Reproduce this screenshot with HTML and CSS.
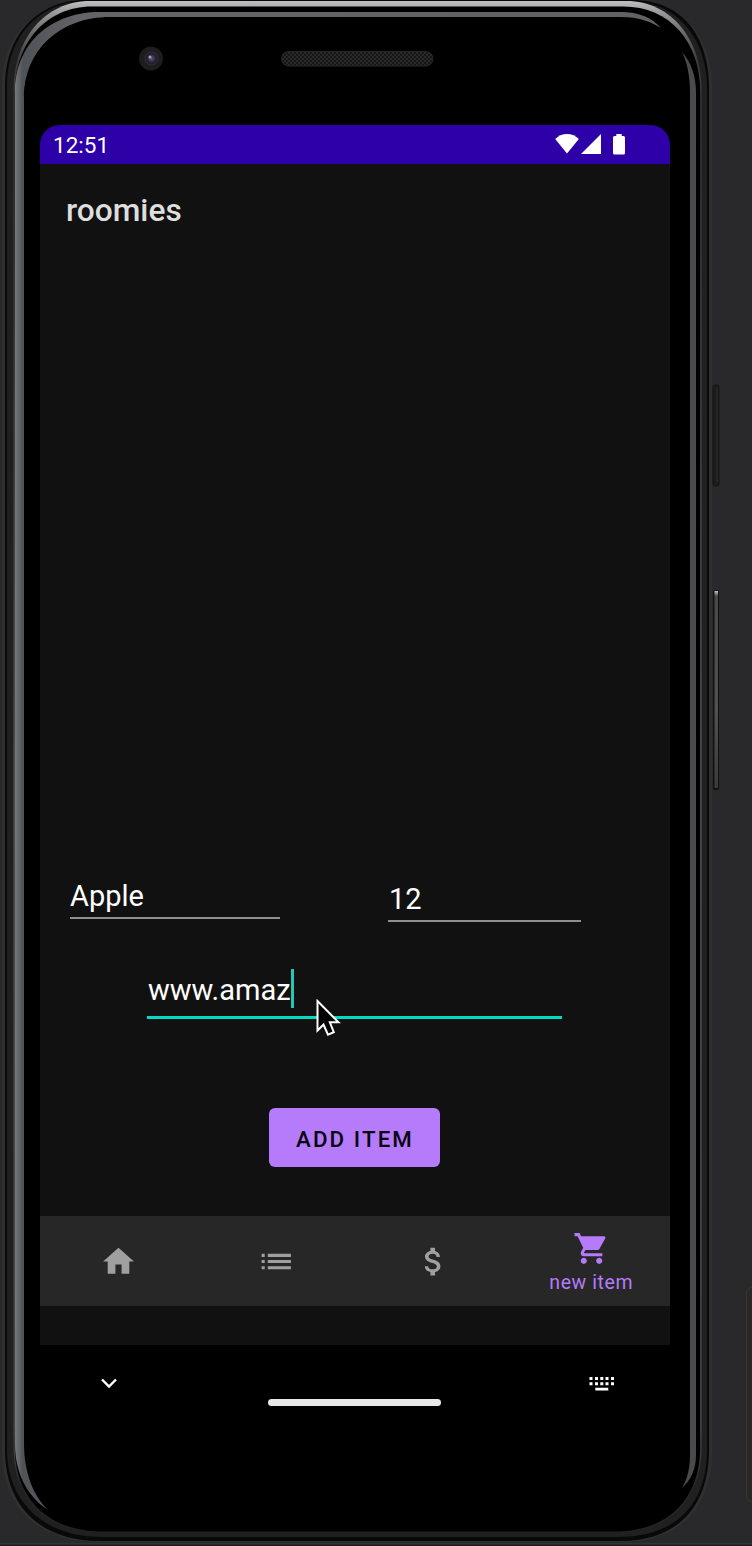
FILE: index.html
```html
<!DOCTYPE html>
<html lang="en">
<head>
<meta charset="utf-8">
<title>roomies</title>
<link rel="stylesheet" href="styles.css">
</head>
<body>
<div class="stage">
  <svg class="device" viewBox="0 0 752 1546" aria-hidden="true">
    <defs>
      <linearGradient id="rim" x1="0" y1="0" x2="0" y2="1">
        <stop offset="0" stop-color="#c0bec1"/><stop offset=".008" stop-color="#98989a"/><stop offset=".022" stop-color="#666"/><stop offset=".04" stop-color="#3c3c3d"/><stop offset=".09" stop-color="#383839"/><stop offset=".5" stop-color="#5c5c5d"/><stop offset=".93" stop-color="#505051"/><stop offset=".97" stop-color="#252525"/>
      </linearGradient>
      <linearGradient id="side" x1="0" y1="0" x2="1" y2="0">
        <stop offset="0" stop-color="#77797c"/><stop offset=".012" stop-color="#4f5257"/><stop offset=".1" stop-color="#646467"/><stop offset="1" stop-color="#626265"/>
      </linearGradient>
      <linearGradient id="key" x1="0" y1="0" x2="0" y2="1">
        <stop offset="0" stop-color="#c9c9c9"/><stop offset=".025" stop-color="#484848"/><stop offset=".6" stop-color="#50504e"/><stop offset="1" stop-color="#3b3b3b"/>
      </linearGradient>
      <pattern id="mesh" width="4" height="4" patternUnits="userSpaceOnUse">
        <rect width="4" height="4" fill="#161616"/><path d="M0 0h2v2H0zM2 2h2v2H2z" fill="#292929"/>
      </pattern>
      <radialGradient id="lens"><stop offset="0" stop-color="#65557e"/><stop offset=".55" stop-color="#30273f"/><stop offset="1" stop-color="#17151c"/></radialGradient>
    </defs>
    <rect x="746.500" y="1287" width="20" height="215" rx="6" fill="#292826" stroke="#363634"/>
    <path d="M0 1543.500H752" stroke="#343436"/><path d="M0 1545.500H752" stroke="#1c1c1f"/>
    <rect x="713" y="385" width="6" height="101" rx="2" fill="#1c1c1d" stroke="#141414"/><path d="M717 388V482" stroke="#303030"/>
    <rect x="713" y="590" width="6" height="200" rx="2" fill="#111"/><rect x="714.500" y="591" width="3.500" height="197" fill="url(#key)"/>
    <path d="M85 0H632C684 0 712 38 712 88V1450C712 1508 680 1542 620 1542H100C38 1542 2 1508 2 1450V85C2 35 38 0 85 0Z" fill="#303031"/>
    <path d="M85 0H632C684 0 709 38 709 88V1450C709 1506 678 1541 620 1541H100C40 1541 5 1506 5 1450V85C5 35 38 0 85 0Z" fill="#090909"/>
    <path d="M88 1H628C678 1 707 40 707 88V1450C707 1504 676 1537 618 1537H102C44 1537 7 1502 7 1450V85C7 38 38 1 88 1Z" fill="#202021"/>
    <path d="M90 1H626C672 1 701.500 40 701.500 90V1448C701.500 1500 670 1532 616 1532H102C46 1532 13.500 1500 13.500 1448V90C13.500 40 44 1 90 1Z" fill="url(#rim)"/>
    <path d="M92 6.500H623C670 6.500 700.200 42 700.200 92V1447C700.200 1499 668 1531.500 615 1531.500H103C47 1531.500 14.800 1498 14.800 1447V92C14.800 43 46 6.500 92 6.500Z" fill="#000"/>
    <path d="M48 1510C25 1495 15 1470 15 1444V92C15 44 50 12 100 12H620C640 12 652 18 661 28C645 18 632 17 615 17H110C60 17 24 50 24 98V1444C24 1470 32 1495 48 1510Z" fill="url(#side)"/>
    <path d="M682 52C691 62 696 76 696 92V1455C696 1469 691 1480 682 1488C688 1478 690 1467 690 1454V92C690 76 687 62 682 52Z" fill="#4b4b4e"/>
    <circle cx="151" cy="58.500" r="12" fill="#1d1d1d"/><circle cx="151.500" cy="58.500" r="6.500" fill="url(#lens)" stroke="#353040"/><circle cx="150" cy="57" r="1.500" fill="#a79abe"/>
    <rect x="281.500" y="51.500" width="151.500" height="14.500" rx="7.250" fill="url(#mesh)" stroke="#262626"/>
  </svg>

  <main class="screen">
    <header class="status">
      <span class="clock">12:51</span>
      <svg class="signals" width="72" height="22" viewBox="0 0 72 22" fill="#fff">
        <path d="M12 20.500L.2 6C3 2.800 7.500.9 12 .9S21 2.800 23.800 6Z"/>
        <path d="M26 21H46V.9Z"/>
        <path d="M61.300 1h5.400v2H68.500q1.500 0 1.500 1.500V20q0 1.500-1.500 1.500h-9q-1.500 0-1.500-1.500V4.500Q58 3 59.500 3h1.800Z"/>
      </svg>
    </header>
    <h1 class="title">roomies</h1>
    <form class="form">
      <div class="row">
        <div class="field name">Apple</div>
        <div class="field amount">12</div>
      </div>
      <div class="field link"><span class="value">www.amaz</span><span class="caret"></span>
        <svg class="pointer" width="26" height="40" viewBox="0 0 26 40"><path d="M1.500 2V31.500L7.500 25.500L12 35.700L17.800 33.200L13.800 23.300H22.500Z" fill="#000" stroke="#fff" stroke-width="2"/></svg>
      </div>
      <button class="add" type="button">ADD ITEM</button>
    </form>
    <nav class="tabs">
      <a class="tab"><svg viewBox="0 0 24 24"><path d="M10 20v-6h4v6h5v-8h3L12 3 2 12h3v8z"/></svg></a>
      <a class="tab list"><svg viewBox="0 0 24 24"><path d="M3 13h2v-2H3v2zm0 4h2v-2H3v2zm0-8h2V7H3v2zm4 4h15v-2H7v2zm0 4h15v-2H7v2zM7 7v2h15V7H7z"/></svg></a>
      <a class="tab"><svg viewBox="0 0 24 24"><path d="M11.800 10.900c-2.270-.59-3-1.200-3-2.150 0-1.090 1.010-1.850 2.700-1.850 1.780 0 2.440.85 2.500 2.100h2.210c-.07-1.720-1.120-3.300-3.210-3.810V3h-3v2.160c-1.940.42-3.500 1.680-3.500 3.610 0 2.310 1.910 3.460 4.700 4.130 2.500.6 3 1.480 3 2.410 0 .69-.49 1.790-2.700 1.790-2.060 0-2.870-.92-2.980-2.100h-2.200c.12 2.190 1.760 3.420 3.680 3.830V21h3v-2.150c1.950-.37 3.500-1.500 3.500-3.550 0-2.840-2.430-3.810-4.700-4.400z"/></svg></a>
      <a class="tab active"><svg viewBox="0 0 24 24"><path d="M7 18c-1.100 0-1.990.9-1.990 2S5.900 22 7 22s2-.9 2-2-.9-2-2-2zM1 2v2h2l3.600 7.590-1.350 2.450c-.16.280-.25.610-.25.960 0 1.100.9 2 2 2h12v-2H7.420c-.14 0-.25-.11-.25-.25l.03-.12.900-1.630h7.450c.75 0 1.410-.41 1.750-1.030l3.580-6.490c.08-.14.120-.31.120-.48 0-.55-.45-1-1-1H5.210l-.94-2H1zm16 16c-1.100 0-1.990.9-1.990 2s.89 2 1.990 2 2-.9 2-2-.9-2-2-2z"/></svg><span>new item</span></a>
    </nav>
  </main>

  <footer class="system">
    <svg class="down" width="18" height="12" viewBox="0 0 18 12"><path d="M2 1.500L9 8.500L16 1.500" fill="none" stroke="#fff" stroke-width="2.400"/></svg>
    <span class="handle"></span>
    <svg class="keys" width="26" height="16" viewBox="0 0 26 16" fill="#fff"><path d="M.5 1h3v3h-3zM6 1h3v3H6zM11.300 1h3v3h-3zM16.500 1h3v3h-3zM22 1h3v3h-3zM.5 6.200h3v3h-3zM6 6.200h3v3H6zM11.300 6.200h3v3h-3zM16.500 6.200h3v3h-3zM22 6.200h3v3h-3zM6.300 11.700h13v2.800h-13z"/></svg>
  </footer>
</div>
</body>
</html>
```
FILE: styles.css
```css
* { box-sizing: border-box; }
body { margin: 0; background: #29292b; font-family: Roboto, sans-serif; color: #fff; }
.stage { position: relative; height: 1546px; overflow: hidden; padding: 125px 82px 0 40px; }
.device { position: absolute; inset: 0; width: 752px; height: 1546px; }
.screen {
  position: relative;
  display: flex;
  flex-direction: column;
  height: 1220px;
  padding-bottom: 39px;
  background: #111;
  border-radius: 20px 20px 0 0;
  overflow: hidden;
}
.status {
  display: flex;
  align-items: center;
  justify-content: space-between;
  height: 39px;
  padding: 1px 43px 0 13px;
  background: #2e00a8;
  font-size: 22.500px;
}
.signals { display: block; margin-top: -3px; }
.title { margin: 29px 0 0 26px; font-size: 31.700px; line-height: 36px; font-weight: 500; color: #dedede; }
.form { flex: 1; display: flex; flex-direction: column; justify-content: flex-end; margin: 0; padding-bottom: 49px; }
.row { display: flex; align-items: flex-start; padding-left: 30px; gap: 108px; }
.field { font-size: 29px; line-height: 40px; white-space: nowrap; }
.name { width: 210px; height: 43px; border-bottom: 2px solid #8f8f8f; }
.amount { width: 193px; height: 43px; margin-top: 3px; padding-left: 1px; border-bottom: 2px solid #8f8f8f; }
.link { position: relative; display: flex; width: 415px; height: 51px; margin: 46px 0 0 107px; border-bottom: 3px solid #03dac5; }
.value { padding: 2px 0 0 1px; }
.caret { width: 3px; height: 39px; margin-top: 1px; background: #26c6b5; }
.pointer { position: absolute; left: 169px; top: 31px; }
.add {
  align-self: center;
  width: 171px;
  height: 59px;
  margin: 89px 2px 0 0;
  padding: 2px 0 0 2px;
  border: 0;
  border-radius: 6px;
  background: #b57bfb;
  color: #080510;
  font: 500 22.300px Roboto, sans-serif;
  letter-spacing: 2.100px;
}
.tabs { display: grid; grid-template-columns: repeat(4, 1fr); height: 90px; background: #272727; }
.tab { display: flex; flex-direction: column; align-items: center; justify-content: center; color: #a0a0a0; font-size: 19.500px; line-height: 22px; letter-spacing: .6px; }
.tab svg { width: 37px; height: 37px; fill: currentColor; }
.list { padding-right: 2px; }
.active { color: #b57bfb; }
.active span { margin: 5px 0 -1px; }
.system { position: relative; display: flex; justify-content: space-between; align-items: flex-start; padding: 31px 55px 0 60px; }
.down { margin-top: 2px; }
.handle { width: 173px; height: 7px; margin: 23px 0 0 2px; border-radius: 4px; background: #e8e8ea; }
```
